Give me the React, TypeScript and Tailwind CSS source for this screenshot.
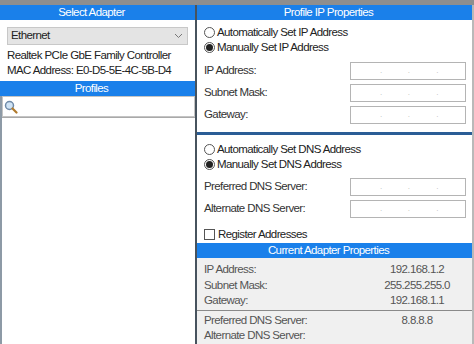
const font = { fontFamily: '"Liberation Sans", Arial, sans-serif' };

function Header({ title }: { title: string }) {
  return (
    <div className="shrink-0 h-[15px] bg-[#1a80ea] text-white text-[11.5px] tracking-[-0.6px] leading-[15px] text-center pr-[12px]">
      {title}
    </div>
  );
}

function Radio({ checked, label }: { checked?: boolean; label: string }) {
  return (
    <div className="flex items-center h-[15px] text-[11.5px] tracking-[-0.6px] text-[#222]">
      <span className="w-[11px] h-[11px] rounded-full border border-[#555] bg-white flex items-center justify-center mr-[2px]">
        {checked && <span className="w-[7px] h-[7px] rounded-full bg-[#222]" />}
      </span>
      {label}
    </div>
  );
}

function IpBox() {
  return (
    <div className="w-[116px] h-[18px] border border-[#b4b4b4] bg-white flex items-center text-[8px] text-[#bbb]">
      <span className="ml-[29px]">.</span>
      <span className="ml-[26px]">.</span>
      <span className="ml-[27px]">.</span>
    </div>
  );
}

function IpRow({ label }: { label: string }) {
  return (
    <div className="flex items-center justify-between h-[18px] pr-[6px] text-[11.5px] tracking-[-0.6px] text-[#333]">
      <span>{label}</span>
      <IpBox />
    </div>
  );
}

function InfoRow({ label, value }: { label: string; value?: string }) {
  return (
    <div className="flex h-[15.5px] items-center text-[11.5px] tracking-[-0.6px] text-[#555]">
      <span className="w-[163px]">{label}</span>
      <span className="w-[100px] text-center">{value}</span>
    </div>
  );
}

export default function App() {
  return (
    <div
      className="w-[474px] h-[344px] overflow-hidden bg-white border-t-[5px] border-[#8e8e8e] flex"
      style={font}
    >
      {/* left column */}
      <div className="w-[197px] flex flex-col border-r-2 border-[#47535e]">
        <Header title="Select Adapter" />
        <div className="shrink-0 px-[7px] pt-[7px] pb-[3.5px] text-[11.5px] tracking-[-0.6px] text-[#222]">
          <div className="h-[18px] bg-[#e4e4e4] border border-[#c8c8c8] flex items-center justify-between pl-[3px] pr-[4px]">
            <span>Ethernet</span>
            <svg width="9" height="6" viewBox="0 0 9 6">
              <path d="M1 1 L4.5 4.5 L8 1" fill="none" stroke="#777" strokeWidth="1" />
            </svg>
          </div>
          <div className="mt-[2.5px] leading-[15px]">Realtek PCIe GbE Family Controller</div>
          <div className="leading-[15px]">MAC Address: E0-D5-5E-4C-5B-D4</div>
        </div>
        <Header title="Profiles" />
        <div className="flex-1 flex flex-col border-l-2 border-[#8d9aa6]">
          <div className="shrink-0 h-[21px] border border-[#c4c4c4] flex items-center pl-[1px]">
            <svg width="14" height="14" viewBox="0 0 14 14">
              <circle cx="5.5" cy="5.5" r="4" fill="#cfe3f5" stroke="#6f8aa8" strokeWidth="1.5" />
              <path d="M8.5 8.5 L12.5 12.5" stroke="#b07a2c" strokeWidth="2.2" strokeLinecap="round" />
            </svg>
          </div>
          <div className="flex-1 border-t border-[#a9a9a9] bg-white" />
        </div>
      </div>

      {/* right column */}
      <div className="flex-1 flex flex-col border-r-2 border-[#b9b9b9]">
        <Header title="Profile IP Properties" />
        <div className="shrink-0 pl-[7px] pt-[5px]">
          <Radio label="Automatically Set IP Address" />
          <Radio checked label="Manually Set IP Address" />
          <div className="mt-[7px] flex flex-col gap-[4px]">
            <IpRow label="IP Address:" />
            <IpRow label="Subnet Mask:" />
            <IpRow label="Gateway:" />
          </div>
        </div>
        <div className="shrink-0 mt-[8px] h-[3px] bg-[#2a5d96]" />
        <div className="shrink-0 pl-[7px] pt-[7px]">
          <Radio label="Automatically Set DNS Address" />
          <Radio checked label="Manually Set DNS Address" />
          <div className="mt-[6px] flex flex-col gap-[4px]">
            <IpRow label="Preferred DNS Server:" />
            <IpRow label="Alternate DNS Server:" />
          </div>
          <div className="mt-[9px] flex items-center h-[15px] text-[11.5px] tracking-[-0.6px] text-[#222]">
            <span className="w-[11px] h-[11px] border border-[#555] bg-white mr-[3px]" />
            Register Addresses
          </div>
        </div>
        <div className="shrink-0 mt-[1px]">
          <Header title="Current Adapter Properties" />
        </div>
        <div className="flex-1 bg-[#f0f0f0] pl-[7px]">
          <div className="pt-[4px] pb-[1.5px]">
            <InfoRow label="IP Address:" value="192.168.1.2" />
            <InfoRow label="Subnet Mask:" value="255.255.255.0" />
            <InfoRow label="Gateway:" value="192.168.1.1" />
          </div>
          <div className="border-t border-[#8a8a8a] -ml-[7px] pl-[7px] pt-[1.5px]">
            <InfoRow label="Preferred DNS Server:" value="8.8.8.8" />
            <InfoRow label="Alternate DNS Server:" />
          </div>
        </div>
      </div>
    </div>
  );
}
